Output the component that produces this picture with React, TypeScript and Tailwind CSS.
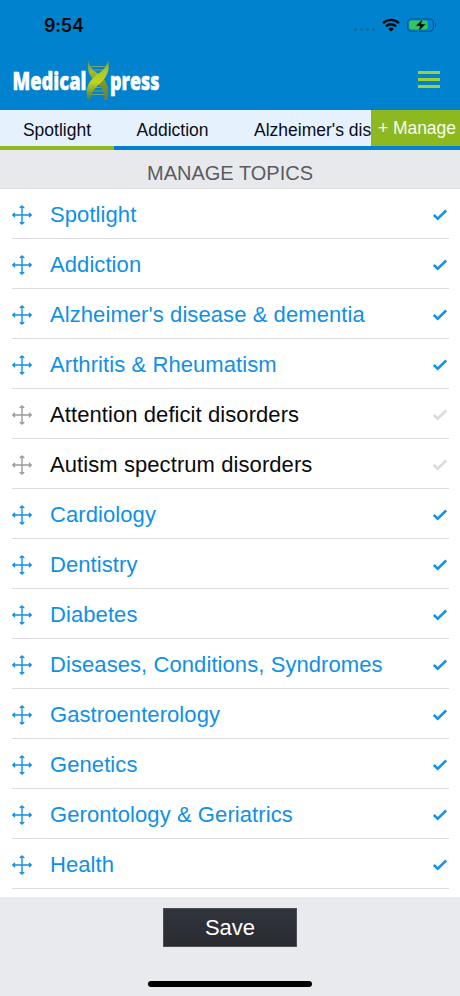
interface Topic {
  name: string;
  selected: boolean;
}

const topics: Topic[] = [
  { name: 'Spotlight', selected: true },
  { name: 'Addiction', selected: true },
  { name: "Alzheimer's disease & dementia", selected: true },
  { name: 'Arthritis & Rheumatism', selected: true },
  { name: 'Attention deficit disorders', selected: false },
  { name: 'Autism spectrum disorders', selected: false },
  { name: 'Cardiology', selected: true },
  { name: 'Dentistry', selected: true },
  { name: 'Diabetes', selected: true },
  { name: 'Diseases, Conditions, Syndromes', selected: true },
  { name: 'Gastroenterology', selected: true },
  { name: 'Genetics', selected: true },
  { name: 'Gerontology & Geriatrics', selected: true },
  { name: 'Health', selected: true },
];

function WifiIcon() {
  return (
    <svg width="18" height="14" viewBox="0 0 18 14" fill="none" stroke="#02070c" strokeWidth="2.4">
      <path d="M1 5.2a11.4 11.4 0 0 1 16 0" />
      <path d="M4 8.3a7.2 7.2 0 0 1 10 0" />
      <path d="M9 13.6 6.2 10.9a4.1 4.1 0 0 1 5.6 0Z" fill="#02070c" stroke="none" />
    </svg>
  );
}

function BatteryIcon() {
  return (
    <svg width="30" height="14" viewBox="0 0 30 14" fill="none">
      <rect x="0.6" y="1" width="25.8" height="12.2" rx="3.6" stroke="#07558a" strokeWidth="1.1" />
      <path d="M28 5v4.4c1.6-.6 1.6-3.8 0-4.4Z" fill="#07558a" />
      <rect x="2.2" y="2.6" width="18.4" height="9" rx="2" fill="#35c759" />
      <path d="M15.6 1 8.6 8h4.2l-1.2 5.4L18.8 6h-4.4Z" fill="#02070c" stroke="#1b9b91" strokeWidth="0.7" />
    </svg>
  );
}

function Logo() {
  return (
    <svg width="152" height="42" viewBox="0 0 152 42" overflow="visible">
      <defs>
        <linearGradient id="helix" x1="0" y1="0" x2="0" y2="1">
          <stop offset="0" stopColor="#6d9440" />
          <stop offset="0.25" stopColor="#a9c52b" />
          <stop offset="0.55" stopColor="#c3d51c" />
          <stop offset="1" stopColor="#4f7741" />
        </linearGradient>
        <linearGradient id="helixBack" x1="0" y1="0" x2="0" y2="1">
          <stop offset="0" stopColor="#5b8a5a" />
          <stop offset="0.3" stopColor="#a3bd2b" />
          <stop offset="0.6" stopColor="#7d9430" />
          <stop offset="1" stopColor="#687b43" />
        </linearGradient>
      </defs>
      <g fill="#fff" stroke="#fff" strokeWidth="0.45" fontFamily="'Open Sans', sans-serif" fontWeight="800" fontSize="24.5">
        <text x="1.5" y="30" textLength="74" lengthAdjust="spacingAndGlyphs">Medical</text>
        <text x="99" y="30" textLength="49.5" lengthAdjust="spacingAndGlyphs">press</text>
      </g>
      <path d="M80 6.500h16M81.500 10h13M84 13.500h8M83.500 27.500h9M81.500 31h13M80 34.500h16" stroke="#72a878" strokeWidth="1.1" />
      <path d="M77.300 0c-1.300 10 .7 15.500 6 20.500 6.500 6 9.700 9 9.700 19.500h3.500c2-12-.2-17.500-5.500-23C85 11.500 79 10 77.300 0Z" fill="url(#helixBack)" />
      <path d="M97.300 0c1.700 10-1.300 16.500-6.800 22C84.500 28 80 31 79.300 40h-2.800c-2-11 0-16 5.500-22C87.500 12.500 95.300 10.500 97.300 0Z" fill="url(#helix)" />
    </svg>
  );
}

function MoveIcon() {
  return (
    <svg width="20" height="20" viewBox="0 0 20 20" fill="none" stroke="currentColor" strokeWidth="1.4" strokeLinecap="round" strokeLinejoin="round">
      <path d="M10 1.500v17M1 10h18" />
      <path d="M8.200 2.600 10 1l1.800 1.600M8.200 17.400 10 19l1.800-1.600M2.600 8.200 1 10l1.600 1.800M17.400 8.200 19 10l-1.600 1.800" fill="currentColor" />
    </svg>
  );
}

function CheckIcon() {
  return (
    <svg width="14" height="12" viewBox="0 0 14 12" fill="none" stroke="currentColor" strokeWidth="2.5">
      <path d="M.8 6 4.700 9.700 13.200 1.500" />
    </svg>
  );
}

function TopicRow({ name, selected }: Topic) {
  return (
    <li className="flex h-[50px] items-center border-b border-[#dcdcdf]">
      <span className={`pt-[2px] ${selected ? 'text-[#1190e4]' : 'text-[#9b9b9b]'}`}>
        <MoveIcon />
      </span>
      <span className={`ml-[18px] flex-1 whitespace-nowrap pt-[3px] text-[22px] leading-[46px] tracking-[0.08px] ${selected ? 'text-[#1190e4]' : 'text-[#0a0a0a]'}`}>
        {name}
      </span>
      <span className={`mr-[2px] pt-[2px] ${selected ? 'text-[#1491ea]' : 'text-[#d8dcdc]'}`}>
        <CheckIcon />
      </span>
    </li>
  );
}

export default function App() {
  return (
    <div className="flex h-[996px] w-[460px] flex-col overflow-hidden bg-white font-['Liberation_Sans',Arial,sans-serif]">
      {/* Status bar + brand */}
      <header className="h-[110px] shrink-0 bg-[#0082cf]">
        <div className="flex h-[50px] items-center pl-[44px] pr-[23px]">
          <span className="flex-1 pt-px font-['Inter',sans-serif] text-[18px] font-semibold tracking-[-0.2px] text-[#02070c]">9:54</span>
          <div className="mr-[7px] mt-[9px] flex gap-[3px]">
            <span className="size-[3px] rounded-full bg-[#0869a7]" />
            <span className="size-[3px] rounded-full bg-[#0869a7]" />
            <span className="size-[3px] rounded-full bg-[#0869a7]" />
            <span className="size-[3px] rounded-full bg-[#0869a7]" />
          </div>
          <WifiIcon />
          <span className="ml-[7px]">
            <BatteryIcon />
          </span>
        </div>
        <div className="flex items-start justify-between pl-[11px] pr-[20px] pt-[10px]">
          <Logo />
          <button className="mt-[11px] flex w-[22px] flex-col gap-1" aria-label="Menu">
            <span className="h-[3px] w-full bg-[#9fd137]" />
            <span className="h-[3px] w-full bg-[#9fd137]" />
            <span className="h-[3px] w-full bg-[#9fd137]" />
          </button>
        </div>
      </header>

      {/* Tabs */}
      <nav className="flex h-10 shrink-0 text-[17.5px] leading-[41px] text-[#0a0d14]">
        <div className="flex w-[371px] whitespace-nowrap bg-[#e6f1fe]">
          <span className="h-10 w-[114px] shrink-0 border-b-4 border-[#8db820] text-center">Spotlight</span>
          <span className="h-10 w-[117px] shrink-0 border-b-4 border-[#0082cf] text-center">Addiction</span>
          <span className="h-10 w-[140px] shrink-0 border-b-4 border-[#0082cf] pl-[23px]">Alzheimer's dis</span>
        </div>
        <button className="flex-1 whitespace-nowrap border-b-4 border-[#0082cf] bg-[#8db820] pl-[7px] text-left leading-[37px] tracking-[-0.05px] text-[#f8fbef]">
          + Manage
        </button>
      </nav>

      <h1 className="h-[39px] shrink-0 border-b border-[#dcdee0] bg-[#e8e9ec] text-center text-[20px] leading-[46px] text-[#5b5c5f]">
        MANAGE TOPICS
      </h1>

      <ul className="h-[708px] shrink-0 pl-3 pr-[11px]">
        {topics.map((topic) => (
          <TopicRow key={topic.name} {...topic} />
        ))}
      </ul>

      {/* Save bar */}
      <footer className="flex flex-1 flex-col items-center bg-[#e8eaed] pt-[11px]">
        <button className="h-[39px] w-[134px] border border-[#4b4e53] bg-linear-to-b from-[#30353c] to-[#292b30] text-[22px] leading-[38px] text-white">
          Save
        </button>
        <div className="mt-[34px] h-[6px] w-[164px] rounded-full bg-black" />
      </footer>
    </div>
  );
}
